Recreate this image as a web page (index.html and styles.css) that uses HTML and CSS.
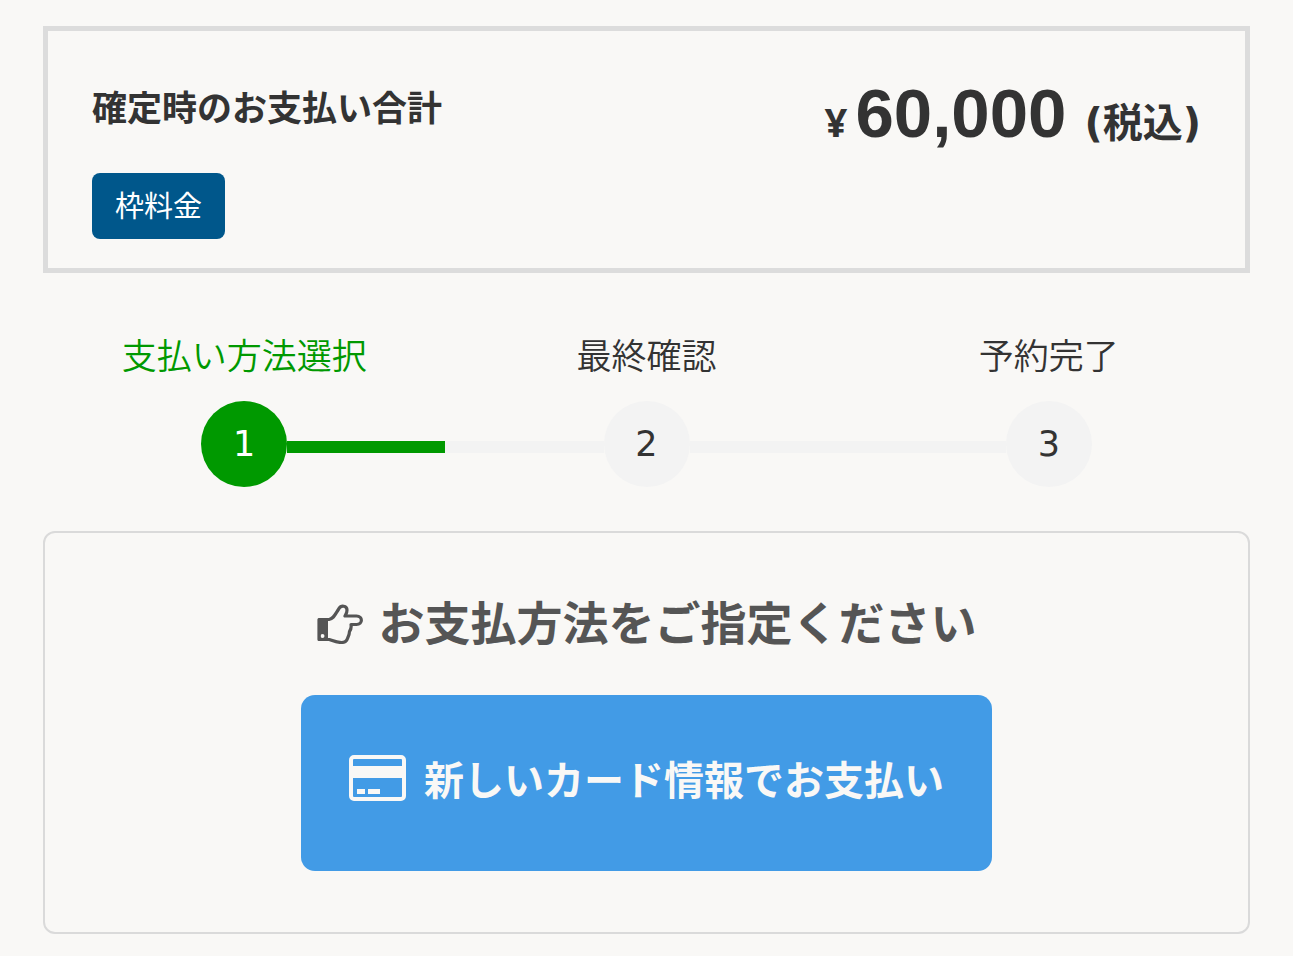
FILE: index.html
```html
<!DOCTYPE html>
<html lang="ja">
<head>
<meta charset="utf-8">
<meta name="viewport" content="width=device-width, initial-scale=1">
<title>お支払い</title>
<link rel="stylesheet" href="styles.css">
</head>
<body>
<main class="page">
  <section class="total">
    <div class="total-info">
      <h1 class="total-title">確定時のお支払い合計</h1>
      <span class="tag">枠料金</span>
    </div>
    <p class="price"><span class="price-unit">¥</span><span class="price-value">60,000</span><span class="price-tax">(税込)</span></p>
  </section>

  <ol class="steps">
    <li class="step step-active">
      <span class="step-label">支払い方法選択</span>
      <span class="step-track"><span class="step-line step-line-none"></span><span class="step-circle">1</span><span class="step-line"></span></span>
    </li>
    <li class="step">
      <span class="step-label">最終確認</span>
      <span class="step-track"><span class="step-line"></span><span class="step-circle">2</span><span class="step-line"></span></span>
    </li>
    <li class="step">
      <span class="step-label">予約完了</span>
      <span class="step-track"><span class="step-line"></span><span class="step-circle">3</span><span class="step-line step-line-none"></span></span>
    </li>
  </ol>

  <section class="method">
    <h2 class="method-title">
      <svg class="hand" viewBox="0 0 46 40" aria-hidden="true">
        <path d="M2 15.500h10c5-1 6-5 10-11 2-3.500 8-3 8 1.500 0 3-1 4-2 6h11.500c6.500 0 6.500 8.500 0 8.500H34c.5 3 0 5-1.500 7 0 3-1 5-2 7-1 3-3 4-6 4-5 0-8-1.500-12.500-3H2z" fill="none" stroke="currentColor" stroke-width="3.200" stroke-linejoin="round"/>
        <path d="M1 14.500h10v22H1zM5.500 30a2 2 0 1 0 0 4 2 2 0 0 0 0-4z" fill="currentColor" fill-rule="evenodd"/>
      </svg>
      <span>お支払方法をご指定ください</span>
    </h2>
    <button class="pay" type="button">
      <svg class="card" viewBox="0 0 57 46" aria-hidden="true">
        <rect x="2" y="2" width="53" height="42" rx="3" fill="none" stroke="currentColor" stroke-width="4"/>
        <path d="M3 11h51v12H3zM8 34h8v5H8zM19 34h12v5H19z" fill="currentColor"/>
      </svg>
      <span>新しいカード情報でお支払い</span>
    </button>
  </section>
</main>
</body>
</html>
```
FILE: styles.css
```css
* {
  box-sizing: border-box;
}

body {
  margin: 0;
  background: #f9f8f6;
  color: #333;
  font-family: "Noto Sans CJK JP", sans-serif;
}

.page {
  padding: 26px 43px 22px;
}

.total {
  display: flex;
  justify-content: space-between;
  align-items: flex-start;
  border: 5px solid #dcdcdc;
  padding: 48px 44px 29px;
}

.total-title {
  margin: 0 0 41px;
  font-size: 35px;
  line-height: 53px;
  font-weight: 700;
}

.tag {
  display: inline-block;
  padding: 0 23px 4px;
  border-radius: 8px;
  background: #00578b;
  color: #fff;
  font-size: 29px;
  line-height: 62px;
}

.price {
  display: flex;
  align-items: baseline;
  margin: 3px 0 0;
  font-size: 40px;
  line-height: 64px;
  font-weight: 700;
}

.price-unit {
  font-family: "Noto Sans", sans-serif;
}

.price-value {
  margin: 0 18px 0 8px;
  font-family: "Liberation Sans", Arial, sans-serif;
  font-size: 69px;
}

.price-tax {
  font-family: "DejaVu Sans", "Noto Sans CJK JP", sans-serif;
}

.steps {
  display: grid;
  grid-template-columns: repeat(3, 1fr);
  margin: 55px 0 44px;
  padding: 0;
  list-style: none;
}

.step {
  text-align: center;
}

.step-label {
  display: block;
  margin-bottom: 21px;
  font-size: 35px;
  line-height: 52px;
  font-weight: 350;
}

.step-track {
  display: flex;
  align-items: center;
}

.step-line {
  flex: 1;
  height: 12px;
  margin-top: 6px;
  background: #f3f3f3;
}

.step-line-none {
  background: none;
}

.step-circle {
  width: 86px;
  height: 86px;
  border-radius: 50%;
  background: #f3f3f3;
  font-family: "DejaVu Sans", sans-serif;
  font-size: 35px;
  line-height: 86px;
}

.step-active .step-label {
  color: #090;
}

.step-active .step-circle,
.step-active .step-line:last-child {
  background: #090;
}

.step-active .step-circle {
  color: #fff;
}

.method {
  display: flex;
  flex-direction: column;
  align-items: center;
  border: 2px solid #dadada;
  border-radius: 12px;
  padding: 53px 40px 61px;
}

.method-title {
  display: flex;
  align-items: center;
  gap: 16px;
  margin: 0 0 41px;
  color: #555;
  font-size: 46px;
  line-height: 68px;
  font-weight: 700;
}

.hand {
  width: 46px;
  height: 40px;
  margin-top: 8px;
}

.pay {
  display: flex;
  align-items: center;
  gap: 18px;
  padding: 53px 48px 63px;
  border: 0;
  border-radius: 14px;
  background: #429be6;
  color: #f9f8f6;
  font: inherit;
  font-size: 40px;
  line-height: 60px;
  font-weight: 700;
}

.card {
  width: 57px;
  height: 46px;
}
```
